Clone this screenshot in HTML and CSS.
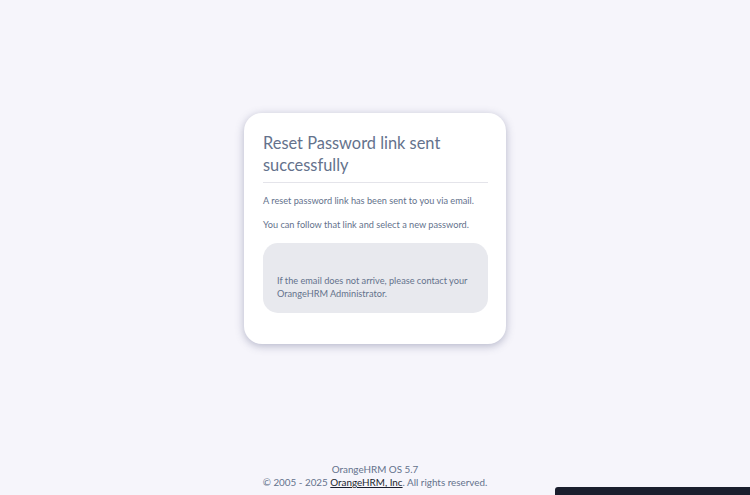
FILE: index.html
```html
<!DOCTYPE html>
<html>
<head>
<meta charset="utf-8">
<link rel="stylesheet" href="styles.css">
</head>
<body>
<div class="page">
  <main class="main">
    <div class="card">
      <h6 class="title">Reset Password link sent successfully</h6>
      <hr class="divider">
      <p class="text">A reset password link has been sent to you via email.</p>
      <p class="text">You can follow that link and select a new password.</p>
      <div class="note">
        <p class="note-text">If the email does not arrive, please contact your OrangeHRM Administrator.</p>
      </div>
    </div>
  </main>
  <footer class="footer">
    <p class="foot-line">OrangeHRM OS 5.7</p>
    <p class="foot-line">© 2005 - 2025 <a class="foot-link" href="#">OrangeHRM, Inc</a>. All rights reserved.</p>
  </footer>
</div>
<div class="dock"></div>
</body>
</html>
```
FILE: styles.css
```css
html, body {
  margin: 0;
  padding: 0;
  height: 100%;
}
body {
  background: #f6f5fb;
  font-family: "Lato", "Open Sans", sans-serif;
  color: #64728c;
  overflow: hidden;
}
.page {
  height: 495px;
  display: flex;
  flex-direction: column;
}
.main {
  flex: 1;
  display: flex;
  justify-content: center;
  align-items: flex-start;
  padding-top: 113px;
}
.card {
  width: 262px;
  box-sizing: border-box;
  background: #fff;
  border-radius: 18px;
  padding: 19px 18px 31px 19px;
  box-shadow: 0 2px 8px rgba(100, 104, 140, 0.45);
}
.title {
  margin: 0;
  font-size: 16.4px;
  font-weight: 400;
  line-height: 22px;
  color: #64728c;
  padding-right: 20px;
}
.divider {
  border: 0;
  border-top: 1px solid #e4e4ea;
  margin: 6px 0 12px 0;
}
.text {
  margin: 0 0 13px 0;
  font-size: 9.2px;
  line-height: 11px;
  color: #64728c;
}
.note {
  margin-top: 11px;
  background: #e8e9ee;
  border-radius: 15px;
  padding: 31px 14px 14px 14px;
  height: 70px;
  box-sizing: border-box;
}
.note-text {
  margin: 0;
  font-size: 9.2px;
  line-height: 13px;
  color: #64728c;
}
.footer {
  text-align: center;
  padding-bottom: 6px;
}
.foot-line {
  margin: 0;
  font-size: 9.85px;
  line-height: 13px;
  color: #64728c;
}
.foot-link {
  color: #1a1e2d;
  text-decoration: underline;
}
.dock {
  position: absolute;
  right: 0;
  bottom: 0;
  width: 195px;
  height: 8px;
  background: #1a1e2d;
  border-top-left-radius: 3px;
}
```
